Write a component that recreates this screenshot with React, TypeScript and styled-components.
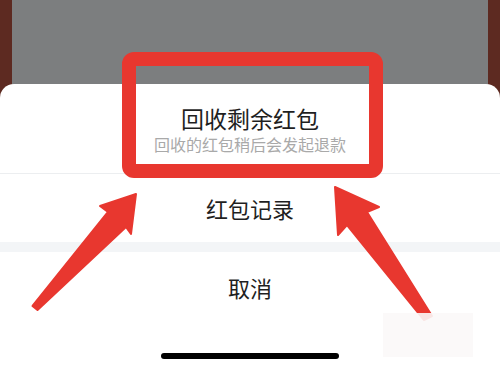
import styled, { createGlobalStyle } from 'styled-components';

const GlobalStyle = createGlobalStyle`
  html, body {
    margin: 0;
    padding: 0;
  }
  body {
    font-family: "Noto Sans CJK SC", "Noto Sans", sans-serif;
  }
`;

// 背景：左右棕色边，中间灰色遮罩
const Page = styled.div`
  position: relative;
  width: 500px;
  height: 368px;
  overflow: hidden;
  background: linear-gradient(
    to right,
    #5d2a21 12px,
    #7c7e7f 12px,
    #7c7e7f 488px,
    #5d2a21 488px
  );
`;

// 底部弹出的操作面板
const Sheet = styled.div`
  margin-top: 84px;
  height: 284px;
  background: #ffffff;
  border-radius: 14px 14px 0 0;
  display: flex;
  flex-direction: column;
`;

const Item = styled.div<{ $height: number; $shift?: number }>`
  height: ${(p) => p.$height}px;
  box-sizing: border-box;
  padding-top: ${(p) => p.$shift ?? 0}px;
  display: flex;
  flex-direction: column;
  align-items: center;
  justify-content: center;
`;

const Title = styled.div<{ $size: number }>`
  font-size: ${(p) => p.$size}px;
  line-height: 26px;
  color: #1f1f1f;
`;

const SubTitle = styled.div`
  font-size: 16px;
  line-height: 18px;
  color: #a9a9a9;
  margin-top: 4px;
`;

const Divider = styled.div`
  height: 1px;
  background: #eceef0;
`;

const Band = styled.div`
  height: 10px;
  background: #f3f5f7;
`;

const HomeBar = styled.div`
  margin: 32px auto 0;
  width: 178px;
  height: 6px;
  border-radius: 3px;
  background: #000000;
`;

// 标注：红框与箭头
const Highlight = styled.div`
  position: absolute;
  left: 122px;
  top: 52px;
  width: 261px;
  height: 126px;
  box-sizing: border-box;
  border: 14px solid #e8372f;
  border-radius: 12px;
`;

const Arrows = styled.svg`
  position: absolute;
  left: 0;
  top: 0;
`;

const Watermark = styled.div`
  position: absolute;
  left: 383px;
  top: 313px;
  width: 90px;
  height: 44px;
  background: rgba(251, 248, 248, 0.9);
`;

const App = () => {
  return (
    <Page>
      <GlobalStyle />
      <Sheet>
        <Item $height={89} $shift={1}>
          <Title $size={23}>回收剩余红包</Title>
          <SubTitle>回收的红包稍后会发起退款</SubTitle>
        </Item>
        <Divider />
        <Item $height={68}>
          <Title $size={22}>红包记录</Title>
        </Item>
        <Band />
        <Item $height={69}>
          <Title $size={22}>取消</Title>
        </Item>
        <HomeBar />
      </Sheet>
      <Highlight />
      <Arrows width="500" height="368" viewBox="0 0 500 368">
        <polygon
          points="32.5,306 108,212 100,206 136,194 131,234 126,227 37.5,310"
          fill="#e8372f"
          stroke="#e8372f"
          strokeWidth="2"
          strokeLinejoin="round"
        />
        <polygon
          points="424,320 347,225 338,235 335,187 379,207 367,212 432,316"
          fill="#e8372f"
          stroke="#e8372f"
          strokeWidth="2"
          strokeLinejoin="round"
        />
      </Arrows>
      <Watermark />
    </Page>
  );
};

export default App;
